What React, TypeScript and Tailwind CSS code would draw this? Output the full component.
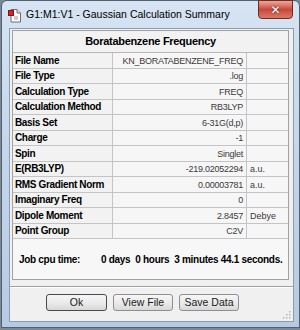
import React from "react";

const rows: { label: string; value: string; unit?: string }[] = [
  { label: "File Name", value: "KN_BORATABENZENE_FREQ" },
  { label: "File Type", value: ".log" },
  { label: "Calculation Type", value: "FREQ" },
  { label: "Calculation Method", value: "RB3LYP" },
  { label: "Basis Set", value: "6-31G(d,p)" },
  { label: "Charge", value: "-1" },
  { label: "Spin", value: "Singlet" },
  { label: "E(RB3LYP)", value: "-219.02052294", unit: "a.u." },
  { label: "RMS Gradient Norm", value: "0.00003781", unit: "a.u." },
  { label: "Imaginary Freq", value: "0" },
  { label: "Dipole Moment", value: "2.8457", unit: "Debye" },
  { label: "Point Group", value: "C2V" },
];

const arial = '"Liberation Sans", Arial, sans-serif';

function DocIcon() {
  return (
    <svg width="14" height="15" viewBox="0 0 14 15">
      <path d="M3 1.5h6l3.5 3.5v9H3z" fill="#fff" stroke="#6d6d6d" />
      <path d="M9 1.5v3.5h3.5" fill="#e4e4e4" stroke="#6d6d6d" />
      <rect x="0.5" y="2.5" width="5" height="5" fill="#d3202a" stroke="#8a1016" />
      <path d="M6 9h4M6 11h4" stroke="#9a9a9a" />
    </svg>
  );
}

function WinButton({ label, primary }: { label: string; primary?: boolean }) {
  return (
    <div
      className={`h-[17px] flex items-center justify-center rounded-[3px] border text-[10.5px] text-[#1a1a1a] bg-gradient-to-b from-[#f6f6f6] via-[#ebebeb] to-[#d8d8d8] ${
        primary ? "w-[61px] border-[#4a4a4a]" : "w-[60px] border-[#8f8f8f]"
      }`}
      style={{ fontFamily: arial }}
    >
      {label}
    </div>
  );
}

export default function App() {
  return (
    <div className="w-[300px] h-[330px] bg-[#7a8898] overflow-hidden">
      <div className="w-[299px] h-[328px] ml-px rounded-t-[6px] border border-[#52606f] bg-gradient-to-b from-[#d6e4f3] via-[#c3d5ea] to-[#b6cbe3] flex flex-col">
        {/* Title bar */}
        <div className="h-[27px] flex items-start relative">
          <div className="ml-[6px] mt-[7px]">
            <DocIcon />
          </div>
          <span
            className="ml-[4px] mt-[6px] text-[10.5px] leading-[14px] text-black"
            style={{ fontFamily: arial }}
          >
            G1:M1:V1 - Gaussian Calculation Summary
          </span>
          <div className="absolute right-[6px] top-[-1px] w-[35px] h-[19px] rounded-b-[4px] border border-[#6e2a22] bg-gradient-to-b from-[#e9a89c] via-[#c9463a] to-[#d77a6c] flex items-center justify-center">
            <span
              className="text-white text-[12px] font-bold leading-none"
              style={{ fontFamily: '"DejaVu Sans", sans-serif', textShadow: "0 0 2px #5a1a12" }}
            >
              ✕
            </span>
          </div>
        </div>

        {/* Client area */}
        <div className="ml-[7px] mr-[5px] h-[294px] bg-[#f0f0f0] border border-[#8d9cad] flex flex-col">
          {/* Summary panel */}
          <div className="ml-[2px] mt-[1px] w-[277px] h-[256px] border border-[#a2a2a2] bg-[#f7f7f7] flex flex-col">
            <div
              className="h-[22px] shrink-0 flex items-center justify-center border-b border-[#b8b8b8] text-[11px] font-bold text-black bg-[#f2f2f2]"
              style={{ fontFamily: arial, letterSpacing: "-0.3px" }}
            >
              Boratabenzene Frequency
            </div>
            <div className="flex flex-col">
              {rows.map((r, i) => (
                <div
                  key={r.label}
                  className={`${i % 2 === 0 ? "h-[16px]" : "h-[15px]"} grid grid-cols-[100px_134px_1fr] border-b border-[#c4c4c4] leading-[12px] overflow-hidden`}
                >
                  <div
                    className="pl-[2px] flex items-center text-[10px] leading-[12px] font-bold text-black bg-[#f2f2f2] border-r border-[#c4c4c4]"
                    style={{ fontFamily: arial, letterSpacing: "-0.35px" }}
                  >
                    {r.label}
                  </div>
                  <div
                    className="pr-[3px] flex items-center justify-end text-[9px] leading-[12px] text-[#3a3a3a] bg-[#f6f6f6] border-r border-[#c4c4c4]"
                    style={{ fontFamily: arial, letterSpacing: "-0.25px" }}
                  >
                    {r.value}
                  </div>
                  <div
                    className="pl-[3px] flex items-center text-[9px] leading-[12px] text-[#3a3a3a] bg-[#f6f6f6]"
                    style={{ fontFamily: arial }}
                  >
                    {r.unit ?? ""}
                  </div>
                </div>
              ))}
            </div>
            <div
              className="flex-1 flex items-center pl-[6px] text-[10px] font-bold text-black"
              style={{ fontFamily: arial, letterSpacing: "-0.3px" }}
            >
              <span className="w-[82px]">Job cpu time:</span>
              <span className="whitespace-pre">0 days  0 hours  3 minutes 44.1 seconds.</span>
            </div>
          </div>

          {/* Separator */}
          <div className="mt-[6px] h-[2px] border-t border-[#a0a0a0] border-b border-b-white" />

          {/* Buttons */}
          <div className="mt-[6px] ml-[36px] flex gap-[6px]">
            <WinButton label="Ok" primary />
            <WinButton label="View File" />
            <WinButton label="Save Data" />
          </div>
          <div className="flex-1 flex items-end justify-end pr-[2px] pb-[2px]">
            <svg width="8" height="8" viewBox="0 0 8 8">
              <rect x="6" y="0" width="1.5" height="1.5" fill="#b5b5b5" />
              <rect x="3" y="3" width="1.5" height="1.5" fill="#b5b5b5" />
              <rect x="6" y="3" width="1.5" height="1.5" fill="#b5b5b5" />
              <rect x="0" y="6" width="1.5" height="1.5" fill="#b5b5b5" />
              <rect x="3" y="6" width="1.5" height="1.5" fill="#b5b5b5" />
              <rect x="6" y="6" width="1.5" height="1.5" fill="#b5b5b5" />
            </svg>
          </div>
        </div>
      </div>
    </div>
  );
}
